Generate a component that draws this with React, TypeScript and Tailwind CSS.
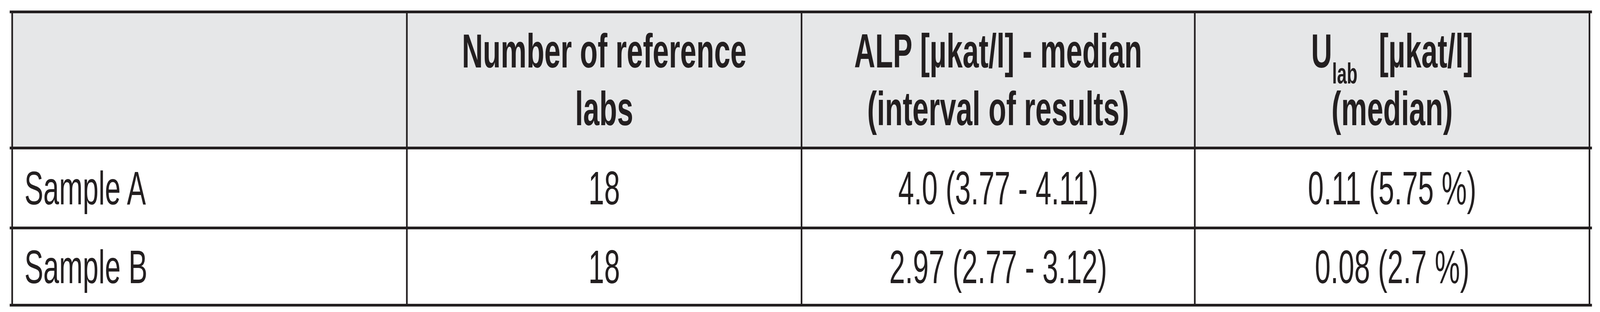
import React, { useState } from "react";

const Line = () => <div className="h-[7px] w-full bg-[#231f20]" />;

const headFont = "font-['Liberation_Sans',Arial,sans-serif] font-bold text-[123px] leading-[148px] text-[#231f20]";
const bodyFont = "font-['Liberation_Sans',Arial,sans-serif] text-[120px] leading-none text-[#231f20]";

export default function App() {
  const [sx] = useState(() =>
    typeof window !== "undefined" ? Math.min(1, window.innerWidth / 6762) : 1
  );
  return (
    <div className="w-full h-[800px] overflow-hidden bg-white">
      <div
        className="w-[6762px] h-[800px] bg-white pt-[27px] pl-[41px] origin-top-left"
        style={{ transform: `scaleX(${sx})` }}
      >
        <div className="w-[6687px] flex flex-col">
          <Line />
          <div className="flex h-[342px] px-[7px]">
            <div className="w-[1668px] border-l-[7px] border-[#231f20] bg-[#e6e7e8]" />
            <div className={`w-[1668px] border-l-[7px] border-[#231f20] bg-[#e6e7e8] flex items-center justify-center text-center ${headFont}`}>
              <div>
                Number of reference
                <br />
                labs
              </div>
            </div>
            <div className={`w-[1662px] border-l-[7px] border-[#231f20] bg-[#e6e7e8] flex items-center justify-center text-center ${headFont}`}>
              <div>
                ALP [µkat/l] - median
                <br />
                (interval of results)
              </div>
            </div>
            <div className={`w-[1675px] border-l-[7px] border-r-[7px] border-[#231f20] bg-[#e6e7e8] flex items-center justify-center text-center ${headFont}`}>
              <div>
                U<span className="text-[74px] leading-[0] align-[-41px] mr-[56px]">lab</span> [µkat/l]
                <br />
                (median)
              </div>
            </div>
          </div>
          <Line />
          <div className={`flex h-[198px] px-[7px] ${bodyFont}`}>
            <div className="w-[1668px] border-l-[7px] border-[#231f20] flex items-center pl-[48px]">Sample A</div>
            <div className="w-[1668px] border-l-[7px] border-[#231f20] flex items-center justify-center">18</div>
            <div className="w-[1662px] border-l-[7px] border-[#231f20] flex items-center justify-center">4.0 (3.77 - 4.11)</div>
            <div className="w-[1675px] border-l-[7px] border-r-[7px] border-[#231f20] flex items-center justify-center">0.11 (5.75 %)</div>
          </div>
          <Line />
          <div className={`flex h-[191px] px-[7px] ${bodyFont}`}>
            <div className="w-[1668px] border-l-[7px] border-[#231f20] flex items-center pl-[48px]">Sample B</div>
            <div className="w-[1668px] border-l-[7px] border-[#231f20] flex items-center justify-center">18</div>
            <div className="w-[1662px] border-l-[7px] border-[#231f20] flex items-center justify-center">2.97 (2.77 - 3.12)</div>
            <div className="w-[1675px] border-l-[7px] border-r-[7px] border-[#231f20] flex items-center justify-center">0.08 (2.7 %)</div>
          </div>
          <Line />
        </div>
      </div>
    </div>
  );
}
